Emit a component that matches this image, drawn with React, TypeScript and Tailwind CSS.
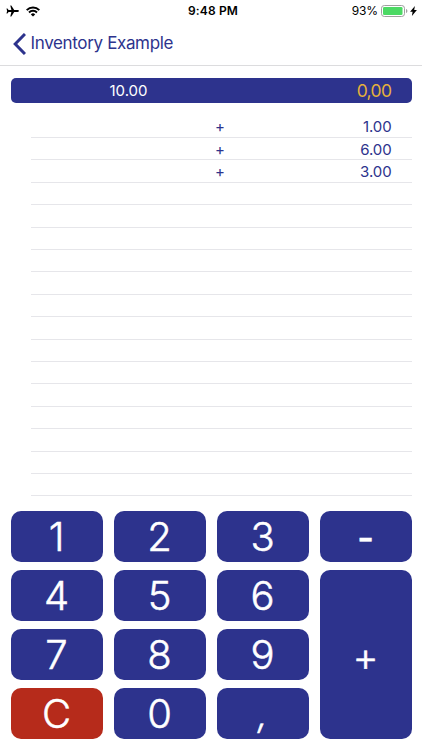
import clsx from "clsx";

type Entry = {
  operator: string;
  value: string;
};

type Key = {
  label: string;
  className?: string;
  labelClassName?: string;
};

const entries: Entry[] = [
  { operator: "+", value: "1.00" },
  { operator: "+", value: "6.00" },
  { operator: "+", value: "3.00" },
];

const ROW_COUNT = 17;

const keys: Key[] = [
  { label: "1" },
  { label: "2" },
  { label: "3" },
  { label: "-", labelClassName: "font-medium text-[36px] pt-[2px]" },
  { label: "4" },
  { label: "5" },
  { label: "6" },
  { label: "+", className: "row-span-3 bg-[#2d338d]", labelClassName: "pt-[4px] text-[40px]" },
  { label: "7" },
  { label: "8" },
  { label: "9" },
  { label: "C", className: "bg-[#b62b1b]" },
  { label: "0" },
  { label: ",", labelClassName: "text-[36px] font-light italic" },
];

function StatusBar() {
  return (
    <div className="grid h-[22px] grid-cols-3 items-center pl-[6px] pr-[5px] text-black">
      <div className="flex items-center gap-[7px]">
        <svg width="13" height="12" viewBox="0 0 13 12">
          <path d="M12.9 6c0-.5-.5-.9-1.3-.9H8.2L5.3.6h-1l1.1 4.5H2.6L1.4 3.6H.5L1.1 6 .5 8.4h.9l1.2-1.5h2.8l-1.1 4.5h1l2.9-4.5h3.4c.8 0 1.3-.4 1.3-.9Z" />
        </svg>
        <svg width="14" height="11" viewBox="0 0 14 11" fill="none" stroke="black" strokeWidth="2">
          <path d="M.7 4.1a9 9 0 0 1 12.6 0" />
          <path d="M3 6.5a5.7 5.7 0 0 1 8 0" />
          <path d="M7 10.6 4.8 8.4a3 3 0 0 1 4.4 0Z" fill="black" stroke="none" />
        </svg>
      </div>
      <div className="pl-[3px] text-center text-[12px] font-semibold tracking-[0.15px] whitespace-nowrap">
        9:48 PM
      </div>
      <div className="flex items-center justify-end">
        <span className="mr-[3px] text-[12px] tracking-[-0.1px]">93%</span>
        <svg width="27" height="12" viewBox="0 0 27 12">
          <rect x=".5" y=".5" width="23" height="11" rx="2.8" fill="white" stroke="#a0a0a0" />
          <rect x="2" y="2" width="19.5" height="8" rx="1.3" fill="#4cd964" />
          <path d="M25 4v4c.9-.3 1.4-1.1 1.4-2S25.9 4.3 25 4Z" fill="#a0a0a0" />
        </svg>
        <svg className="ml-[2px]" width="7" height="10" viewBox="0 0 7 10">
          <path d="M4.9 0 .1 5.7h2.5L1.9 10l5-5.9H4.2Z" />
        </svg>
      </div>
    </div>
  );
}

function NavBar() {
  return (
    <div className="flex h-[44px] items-center border-b border-[#dcdcde] pl-[13px] text-[#2d338d]">
      <svg width="13" height="22" viewBox="0 0 13 22" fill="none" stroke="currentColor" strokeWidth="3">
        <path d="M12 1 2.2 11 12 21" />
      </svg>
      <span className="ml-[4.5px] text-[17px] tracking-[-0.35px]">
        Inventory Example
      </span>
    </div>
  );
}

function Display() {
  return (
    <div className="mx-[10.5px] mt-[11.5px] flex h-[25.5px] items-center justify-between rounded-[5px] bg-[#2d338d] pl-[99px] pr-[20px]">
      <span className="pt-px text-[15px] text-white">10.00</span>
      <span className="pt-[2px] text-[17.5px] tracking-[-0.6px] text-[#e5b13b]">0,00</span>
    </div>
  );
}

function EntryList() {
  return (
    <div className="mt-[12.7px] mr-[10.5px] ml-[31px]">
      {Array.from({ length: ROW_COUNT }, (_, index) => {
        const entry = entries[index];
        return (
          <div
            key={index}
            className="flex h-[22.4px] items-center border-b border-[#e6e6ea] pt-[2px] pr-[20px] pl-[184px] text-[15px] text-[#2d338d]"
          >
            {entry && (
              <>
                <span>{entry.operator}</span>
                <span className="ml-auto tracking-[-0.1px]">{entry.value}</span>
              </>
            )}
          </div>
        );
      })}
    </div>
  );
}

function Keypad() {
  return (
    <div className="mx-[10.5px] mt-[15px] grid grid-cols-4 grid-rows-[repeat(4,51px)] gap-x-[11px] gap-y-[8px]">
      {keys.map((key) => (
        <button
          key={key.label}
          className={clsx(
            "flex items-center justify-center rounded-[10px] text-[40px] leading-none font-light text-white [-webkit-text-stroke:0.5px_white]",
            key.className ?? "bg-[#2d338d]"
          )}
        >
          <span className={key.labelClassName}>{key.label}</span>
        </button>
      ))}
    </div>
  );
}

export default function App() {
  return (
    <div className="h-[750px] w-[422px] overflow-hidden bg-white font-['Inter',sans-serif]">
      <StatusBar />
      <NavBar />
      <Display />
      <EntryList />
      <Keypad />
    </div>
  );
}
